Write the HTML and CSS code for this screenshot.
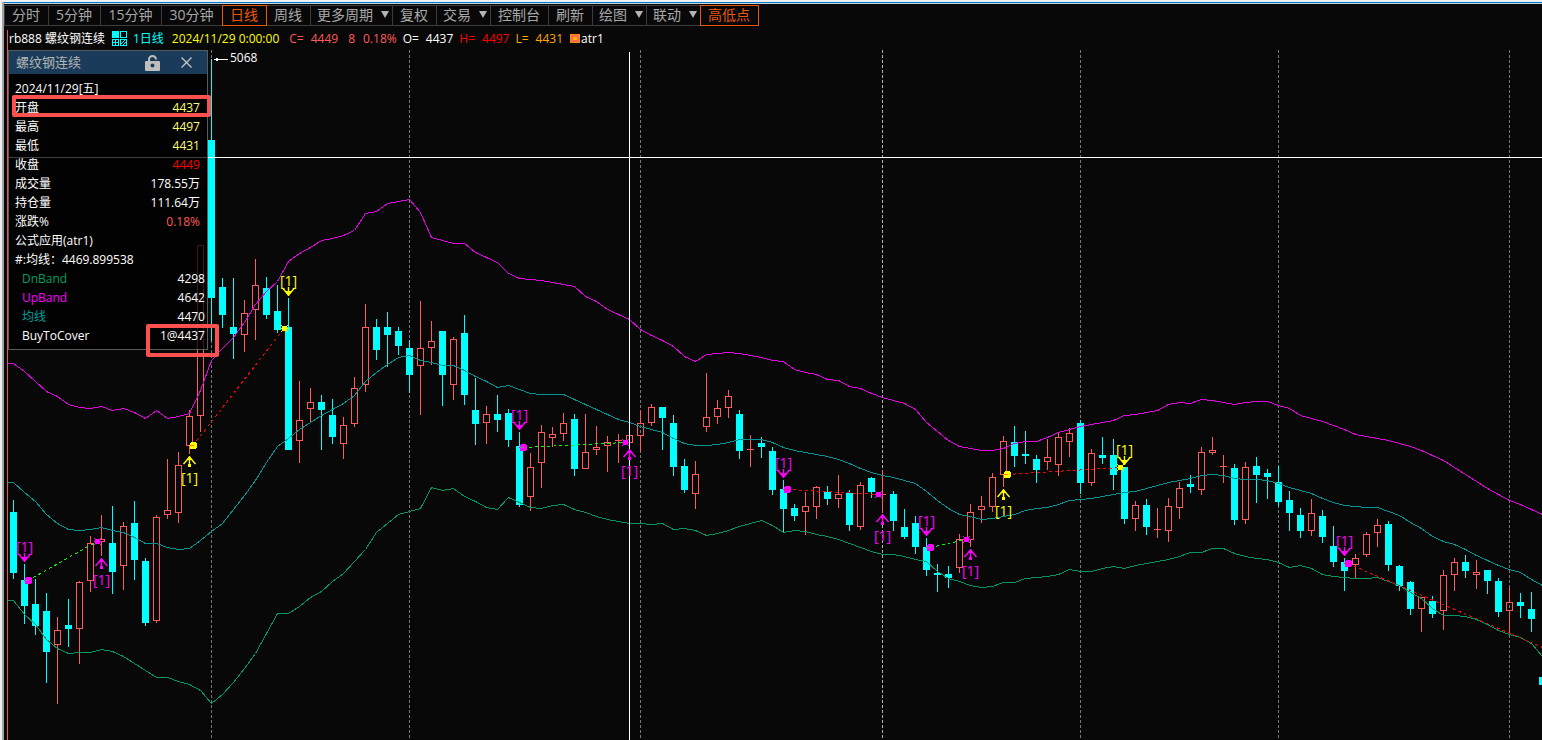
FILE: index.html
```html
<!DOCTYPE html>
<html lang="zh-CN">
  <head>
    <meta charset="UTF-8" />
    <meta name="viewport" content="width=device-width, initial-scale=1.0" />
    <title>rb888 螺纹钢连续</title>
    <link rel="stylesheet" href="styles.css">
  </head>
  <body>
    <div class="window">
      <!-- Period toolbar -->
      <nav class="toolbar">
        <button type="button" class="tool">分时</button>
        <button type="button" class="tool">5分钟</button>
        <button type="button" class="tool wide">15分钟</button>
        <button type="button" class="tool wide">30分钟</button>
        <button type="button" class="tool active">日线</button>
        <button type="button" class="tool">周线</button>
        <div class="tool drop">
          <select aria-label="更多周期"><option>更多周期</option></select>
        </div>
        <button type="button" class="tool">复权</button>
        <div class="tool drop">
          <select aria-label="交易"><option>交易</option></select>
        </div>
        <button type="button" class="tool">控制台</button>
        <button type="button" class="tool">刷新</button>
        <div class="tool drop">
          <select aria-label="绘图"><option>绘图</option></select>
        </div>
        <div class="tool drop">
          <select aria-label="联动"><option>联动</option></select>
        </div>
        <button type="button" class="tool active">高低点</button>
      </nav>

      <main class="workspace">
        <!-- Quote line -->
        <div class="quote">
          <span class="name">rb888 螺纹钢连续</span>
          <svg class="grid-icon" width="15" height="15" viewBox="0 0 15 15" shape-rendering="crispEdges">
            <rect x="0" y="0" width="7" height="7" fill="#00ffff" />
            <g fill="none" stroke="#00ffff">
              <rect x="8.5" y="0.5" width="6" height="6" />
              <rect x="0.5" y="8.5" width="6" height="6" />
              <rect x="8.5" y="8.5" width="6" height="6" />
              <path d="M3.5 8v7M0 11.5h7" />
              <path d="M9 13l4-4M10 15l5-5" />
            </g>
          </svg>
          <span class="cyan">1日线</span>
          <span class="yellow date">2024/11/29 0:00:00</span>
          <span class="coral pair"><span>C=</span><span>4449</span></span>
          <span class="coral change">8</span>
          <span class="coral">0.18%</span>
          <span class="pair"><span>O=</span><span>4437</span></span>
          <span class="red pair"><span>H=</span><span>4497</span></span>
          <span class="orange pair"><span>L=</span><span>4431</span></span>
          <span class="formula"><i class="formula-icon"></i>atr1</span>
        </div>

        <div class="chart">
          <svg id="chart" class="plot" role="img" aria-label="螺纹钢连续 日线"></svg>

          <!-- Floating data window -->
          <section class="panel">
            <header class="panel-title">
              <h1>螺纹钢连续</h1>
              <button type="button" aria-label="锁定">
                <svg width="16" height="16" viewBox="0 0 16 16">
                  <path d="M4 7V4.500a3.500 3.500 0 0 1 7 0" fill="none" stroke="#bebebe" stroke-width="2" />
                  <rect x="0" y="6" width="15" height="10" rx="1" fill="#bebebe" />
                  <circle cx="7.500" cy="10.500" r="2" fill="#1a3c5a" />
                </svg>
              </button>
              <button type="button" aria-label="关闭">
                <svg width="11" height="11" viewBox="0 0 11 11">
                  <path d="M0.500 0.500l10 10M10.500 0.500l-10 10" stroke="#c8c8c8" stroke-width="1.300" />
                </svg>
              </button>
            </header>
            <table class="data">
              <tbody>
                <tr><th colspan="2">2024/11/29[五]</th></tr>
                <tr class="mark-row"><th>开盘</th><td class="pale">4437</td></tr>
                <tr><th>最高</th><td class="pale">4497</td></tr>
                <tr><th>最低</th><td class="pale">4431</td></tr>
                <tr><th>收盘</th><td class="red">4449</td></tr>
                <tr><th>成交量</th><td>178.55万</td></tr>
                <tr><th>持仓量</th><td>111.64万</td></tr>
                <tr><th>涨跌%</th><td class="coral">0.18%</td></tr>
                <tr><th colspan="2">公式应用(atr1)</th></tr>
                <tr><th colspan="2">#:均线：4469.899538</th></tr>
                <tr class="sub"><th class="green">DnBand</th><td>4298</td></tr>
                <tr class="sub"><th class="magenta">UpBand</th><td>4642</td></tr>
                <tr class="sub"><th class="teal">均线</th><td>4470</td></tr>
                <tr class="sub mark-value"><th>BuyToCover</th><td>1@4437</td></tr>
              </tbody>
            </table>
          </section>
        </div>
      </main>
    </div>

    <script src="chart.js"></script>
  </body>
</html>
```
FILE: styles.css
```css
* {
  margin: 0;
  padding: 0;
  box-sizing: border-box;
}

body {
  font-family: "Open Sans", "Noto Sans CJK SC", sans-serif;
  font-size: 12px;
  line-height: 19px;
  color: #fff;
  background-color: #080808;
}

.window {
  display: flex;
  flex-direction: column;
  height: 100vh;
  padding-top: 1px;
  border-top: 2px solid #f0f0f0;
  border-left: 2px solid #f0f0f0;
  box-shadow: inset 2px 0 #a0a4a8, inset 0 1px #0078c8, inset 0 2px #c8d4dc;
  overflow: hidden;
}

/* Toolbar */
.toolbar {
  display: flex;
  flex: none;
  padding: 2px 0 0 3px;
}

.tool {
  height: 21px;
  margin-left: -1px;
  padding: 0 8px 2px 7px;
  border: 1px solid #3c3c3c;
  font-family: inherit;
  font-size: 14px;
  line-height: 17px;
  color: #a8a8a8;
  background-color: transparent;
  white-space: nowrap;
  cursor: pointer;
}

.tool.wide {
  min-width: 62px;
}

.tool.active {
  position: relative;
  border-color: #e8560c;
  color: #e8560c;
}

.drop {
  display: flex;
  align-items: center;
  gap: 8px;
  padding: 0 3px 2px 6px;
}

.drop select {
  appearance: none;
  border: none;
  font: inherit;
  color: inherit;
  background-color: transparent;
  cursor: pointer;
}

.drop::after {
  content: "";
  border: 4px solid transparent;
  border-top: 7px solid #b4b4b4;
  border-bottom: none;
}

/* Quote line */
.workspace {
  display: flex;
  flex: 1;
  flex-direction: column;
  min-height: 0;
  margin: 4px 0 0 5px;
  border-left: 1px solid #e06428;
}

.quote {
  display: flex;
  flex: none;
  align-items: center;
  gap: 6px;
  height: 20px;
  padding: 0 0 3px 1px;
  white-space: nowrap;
}

.name {
  margin-right: 1px;
}

.grid-icon {
  flex: none;
}

.date {
  margin: 0 4px 0 2px;
}

.pair {
  display: flex;
  gap: 7px;
}

.change {
  margin: 0 2px 0 4px;
}

.formula {
  display: flex;
  align-items: center;
  gap: 1px;
  margin-left: 1px;
}

.formula-icon {
  width: 10px;
  height: 9px;
  border: 3px solid #ff6a50;
  background-color: #ffb400;
  outline: 1px solid #ff8c00;
  outline-offset: -1px;
}

/* Chart */
.chart {
  position: relative;
  flex: 1;
  min-height: 0;
}

.plot {
  display: block;
  width: 100%;
  height: 100%;
}

.grid-line {
  stroke: #787878;
  stroke-dasharray: 3 2;
}

.grid-line.bright {
  stroke: #b4b4b4;
}

.up {
  fill: none;
  stroke: #ff5a5a;
}

.down {
  fill: #00ffff;
  stroke: #00ffff;
}

.band {
  fill: none;
}

.trade {
  stroke-dasharray: 3 3;
}

.crosshair {
  stroke: #fff;
}

.arrow {
  fill: none;
  stroke-width: 1.4;
}

.signal {
  font-size: 14px;
  text-anchor: middle;
}

.peak {
  font-size: 12px;
  fill: #fff;
}

/* Data window */
.panel {
  position: absolute;
  top: 0;
  left: 0;
  width: 200px;
  border: 1px solid #5a5a5a;
  background-color: rgba(0, 0, 0, 0.75);
}

.panel-title {
  display: flex;
  align-items: center;
  height: 23px;
  padding: 0 15px 0 7px;
  background-color: #1a3c5a;
}

.panel-title h1 {
  flex: 1;
  font-size: 13px;
  font-weight: normal;
  color: #b4b4b4;
}

.panel-title button {
  display: flex;
  margin-left: 20px;
  border: none;
  background: none;
  cursor: pointer;
}

.data {
  width: 100%;
  margin: 5px 0 4px;
  border-collapse: collapse;
}

.data tr {
  position: relative;
  height: 19px;
}

.data th {
  padding-left: 6px;
  font-weight: normal;
  text-align: left;
}

.data td {
  padding-right: 7px;
  text-align: right;
}

.data .sub th {
  padding-left: 13px;
}

.data .sub td {
  padding-right: 2px;
}

/* Highlight frames drawn over the rows */
.mark-row::after,
.mark-value::after {
  content: "";
  position: absolute;
  border: 4px solid #ff5050;
  border-radius: 2px;
}

.mark-row::after {
  inset: -3px -4px 0 3px;
}

.mark-value::after {
  inset: -2px -12px -12px 137px;
}

.cyan { color: #00ffff; }
.yellow { color: #ffff00; }
.pale { color: #ffff78; }
.coral { color: #ff5a5a; }
.red { color: #fa0000; }
.orange { color: #ffa500; }
.green { color: #00a064; }
.magenta { color: #ff00ff; }
.teal { color: #00a0a0; }
```
FILE: chart.js
```javascript
const NS = "http://www.w3.org/2000/svg";
const STEP = 11;
const FIRST_X = 13;

// high, body top, body bottom, low; "u" = hollow, "d" = filled
const candles = `
d500,512,573,579 d564,580,606,624 d579,604,626,635 d593,611,652,683 u617,630,645,704 d599,625,629,647
u581,582,629,664 u536,543,581,592 u515,539,542,556 d506,543,572,594 u522,526,566,590 d501,523,560,580
d558,561,623,626 u515,517,621,623 u459,510,515,519 u452,465,513,523 u410,416,446,454 u245,245,416,432
d59,140,298,341 d278,287,315,328 d278,327,334,359 u300,313,335,352 u259,285,310,340 d277,288,315,319
d285,311,330,333 d298,327,450,450 u381,420,441,463 u388,402,409,422 d395,402,410,450 d399,415,437,444
u417,425,444,459 u377,388,424,427 u304,327,385,392 d319,327,350,360 d312,327,335,367 d327,331,346,355
d340,348,375,393 u301,348,366,415 u321,341,348,365 d331,331,375,406 u337,339,385,400 d315,333,395,405
d378,410,424,445 u406,414,423,444 d395,414,420,432 d409,413,440,447 d432,446,505,507 u453,467,497,511
u425,432,463,488 u427,434,438,447 u413,423,434,441 d414,419,469,476 u414,452,469,469 u426,447,450,455
u436,442,446,472 u434,440,441,463 u435,435,443,443 u410,423,436,452 u404,407,423,426 d407,407,418,450
d415,423,467,476 d459,466,490,493 u461,474,494,509 u373,417,427,432 u400,408,417,424 u390,396,408,418
d410,414,451,459 u435,449,450,467 d437,443,447,458 d447,451,490,495 d480,489,509,532 d504,508,516,521
u492,506,512,535 u486,487,507,519 d486,492,499,505 u475,494,499,508 d490,493,525,531 u482,485,527,530
d477,478,492,498 u470,494,495,513 d491,494,521,531 d509,527,537,539 d516,523,547,554 d538,547,570,576
d564,573,575,592 d566,574,578,588 u534,539,568,573 u504,512,540,547 u496,506,510,523 u473,477,507,512
u436,441,475,487 d426,442,456,467 d431,454,456,464 d455,459,470,483 u439,457,462,470 u432,437,465,476
u428,433,442,457 d420,423,483,494 u449,453,483,486 d437,455,458,464 d439,455,475,490 d467,467,519,524
u501,505,519,531 d499,505,527,535 u508,529,530,538 u498,506,531,542 u482,488,508,519 d475,484,487,493
u447,452,490,495 u437,450,453,455 u455,466,467,483 d464,468,520,525 u462,467,520,524 d457,466,475,503
d469,473,477,499 d466,482,502,506 d491,500,513,531 d508,515,531,538 u499,513,531,536 d510,516,537,543
d526,546,562,567 d558,562,571,591 u554,558,565,578 u532,534,555,557 u519,525,533,547 d521,524,565,571
d565,566,586,591 d581,582,609,615 u597,597,609,632 d596,601,614,618 u570,575,611,630 u558,562,575,591
d555,562,571,578 u560,572,575,589 d570,570,581,594 d578,581,612,617 u588,602,611,634 d593,602,606,618
d592,609,619,632 d677,677,685,685`.trim().split(/\s+/);

const upBand = [
  363, 371, 381, 391, 396, 404, 407, 408, 406, 410, 408, 412, 418, 410, 418, 416, 413, 390, 360, 348,
  337, 322, 304, 291, 281, 261, 253, 247, 240, 238, 235, 230, 213, 211, 203, 201, 199, 212, 237, 240,
  243, 243, 252, 257, 262, 273, 278, 279, 280, 282, 284, 286, 296, 301, 309, 314, 319, 329, 335, 340,
  346, 356, 361, 354, 353, 352, 353, 355, 357, 360, 361, 369, 372, 374, 379, 380, 386, 388, 393, 397,
  400, 403, 409, 422, 431, 440, 446, 448, 450, 450, 448, 443, 441, 441, 437, 432, 429, 426, 424, 422,
  420, 415, 414, 412, 410, 404, 402, 403, 399, 400, 402, 404, 402, 401, 401, 405, 408, 415, 418, 421,
  425, 429, 434, 436, 438, 440, 443, 446, 450, 455, 460, 467, 474, 481, 488, 494, 500, 504, 509, 514,
];

const midBand = [
  482, 492, 501, 514, 523, 529, 530, 529, 527, 530, 532, 537, 543, 543, 547, 549, 548, 540, 531, 523,
  509, 495, 480, 462, 446, 438, 429, 422, 415, 409, 403, 395, 381, 372, 364, 357, 355, 360, 362, 365,
  365, 370, 376, 381, 387, 385, 389, 393, 394, 394, 394, 399, 404, 409, 414, 419, 422, 426, 429, 432,
  438, 443, 445, 445, 444, 442, 439, 439, 439, 442, 447, 450, 452, 454, 456, 459, 463, 468, 472, 475,
  477, 480, 483, 491, 500, 508, 514, 516, 519, 518, 516, 514, 510, 508, 507, 504, 500, 499, 498, 496,
  494, 492, 491, 488, 485, 482, 480, 478, 475, 474, 475, 478, 479, 479, 480, 483, 487, 490, 493, 498,
  502, 505, 506, 507, 507, 511, 515, 522, 528, 536, 541, 544, 549, 555, 560, 565, 569, 572, 579, 585,
];

const dnBand = [
  600, 614, 624, 639, 648, 653, 652, 652, 649, 651, 656, 663, 670, 677, 677, 681, 684, 690, 703, 694,
  682, 668, 653, 633, 613, 613, 606, 597, 591, 581, 573, 561, 549, 532, 523, 514, 511, 508, 487, 490,
  488, 496, 501, 507, 509, 497, 502, 507, 508, 505, 504, 509, 512, 516, 519, 521, 523, 523, 524, 523,
  529, 528, 530, 535, 533, 530, 526, 523, 520, 525, 532, 530, 531, 534, 536, 539, 543, 547, 551, 554,
  554, 556, 559, 561, 571, 578, 581, 585, 587, 586, 582, 582, 578, 577, 576, 574, 569, 571, 571, 568,
  566, 568, 565, 563, 561, 559, 556, 552, 552, 548, 548, 553, 556, 558, 559, 562, 567, 565, 568, 574,
  576, 577, 578, 578, 577, 581, 585, 592, 598, 608, 615, 615, 616, 619, 624, 630, 634, 637, 643, 656,
];

const MAGENTA = "#ff00ff";
const YELLOW = "#ffff00";

// direction, x, arrow tip y, colour
const signals = [
  ["down", 24, 562, MAGENTA], ["up", 101, 558, MAGENTA], ["up", 189, 456, YELLOW],
  ["down", 288, 296, YELLOW], ["down", 519, 430, MAGENTA], ["up", 629, 449, MAGENTA],
  ["down", 783, 478, MAGENTA], ["up", 882, 514, MAGENTA], ["down", 926, 536, MAGENTA],
  ["up", 970, 549, MAGENTA], ["up", 1003, 489, YELLOW], ["down", 1124, 465, YELLOW],
  ["down", 1344, 556, MAGENTA],
];

// x1, y1, x2, y2, line colour, dot colour
const trades = [
  [28, 580, 97, 541, "#00ff00", MAGENTA],
  [193, 445, 284, 328, "#ff0000", YELLOW],
  [523, 447, 625, 442, "#00ff00", MAGENTA],
  [787, 489, 878, 494, "#ff0000", MAGENTA],
  [930, 547, 966, 539, "#00ff00", MAGENTA],
  [1007, 474, 1120, 467, "#ff0000", YELLOW],
  [1348, 563, 1545, 648, "#ff0000", MAGENTA],
];

function add(parent, name, attrs, text) {
  const el = document.createElementNS(NS, name);
  for (const key in attrs) el.setAttribute(key, attrs[key]);
  if (text) el.textContent = text;
  parent.appendChild(el);
  return el;
}

const svg = document.getElementById("chart");
const root = add(svg, "g", { transform: "translate(-8 -50)" });
const crisp = add(root, "g", { "shape-rendering": "crispEdges" });

// Month separators
[211, 409, 640, 882, 1080, 1278, 1509].forEach((x) => {
  add(crisp, "path", {
    class: x === 882 ? "grid-line bright" : "grid-line",
    d: `M${x + 0.5} 50V3000`,
  });
});

// Candles
candles.forEach((item, i) => {
  const up = item[0] === "u";
  const [high, top, bottom, low] = item.slice(1).split(",").map(Number);
  const x = FIRST_X + i * STEP + 0.5;
  const height = Math.max(bottom - top - 1, 0);
  let d = `M${x} ${high}V${top}M${x} ${bottom}V${low}`;
  d += height > 0
    ? `M${x - 3} ${top + 0.5}h6v${height}h-6z`
    : `M${x - 3.5} ${top + 0.5}h7`;
  add(crisp, "path", { class: up ? "up" : "down", d });
});

// Bands
function drawBand(values, color) {
  const points = values.map((y, i) => `${FIRST_X + i * STEP + 0.5},${y + 0.5}`);
  points.unshift(`8,${values[0] + 0.5}`);
  add(crisp, "polyline", { class: "band", stroke: color, points: points.join(" ") });
}
drawBand(upBand, "#e600e6");
drawBand(midBand, "#009696");
drawBand(dnBand, "#00965f");

// Trades
trades.forEach(([x1, y1, x2, y2, color, dot]) => {
  add(crisp, "line", { class: "trade", x1, y1: y1 + 0.5, x2, y2: y2 + 0.5, stroke: color });
  add(crisp, "circle", { cx: x1 + 0.5, cy: y1 + 0.5, r: 4, fill: dot });
  add(crisp, "path", { d: `M${x1 - 3} ${y1 + 0.5}h4`, stroke: color, "stroke-opacity": 0.5 });
  add(crisp, "circle", { cx: x2 + 0.5, cy: y2 + 0.5, r: 3, fill: dot });
  add(crisp, "path", {
    d: `M${x2 - 3} ${y2 - 3}l7 7M${x2 + 4} ${y2 - 3}l-7 7M${x2} ${y2 + 0.5}h5`,
    stroke: dot,
  });
});

// Crosshair
add(crisp, "path", { class: "crosshair", d: "M8 157.5H6000M629.5 52V3000" });

// Signals
signals.forEach(([dir, x, y, color]) => {
  const c = x + 0.5;
  if (dir === "down") {
    add(root, "path", { class: "arrow", d: `M${c - 6} ${y - 8}L${c} ${y - 1}L${c + 6} ${y - 8}M${c} ${y - 9}V${y}`, stroke: color });
    add(root, "path", { d: `M${c - 4} ${y - 5}h8l-4 5z`, fill: color });
    add(root, "text", { class: "signal", x: c, y: y - 10, fill: color }, "[1]");
  } else {
    add(root, "path", { class: "arrow", d: `M${c - 6} ${y + 8}L${c} ${y + 1}L${c + 6} ${y + 8}M${c} ${y}V${y + 10}`, stroke: color });
    add(root, "path", { d: `M${c - 3} ${y + 4}l3 -4l3 4zM${c - 1.5} ${y + 8}h3v3h-3z`, fill: color });
    add(root, "text", { class: "signal", x: c, y: y + 27, fill: color }, "[1]");
  }
});

// Highest price label
add(crisp, "path", { d: "M215 59.5h13", stroke: "#fff" });
add(crisp, "path", { d: "M214 59.5l4 -2v4z", fill: "#fff" });
add(root, "text", { class: "peak", x: 230, y: 62 }, "5068");
```
